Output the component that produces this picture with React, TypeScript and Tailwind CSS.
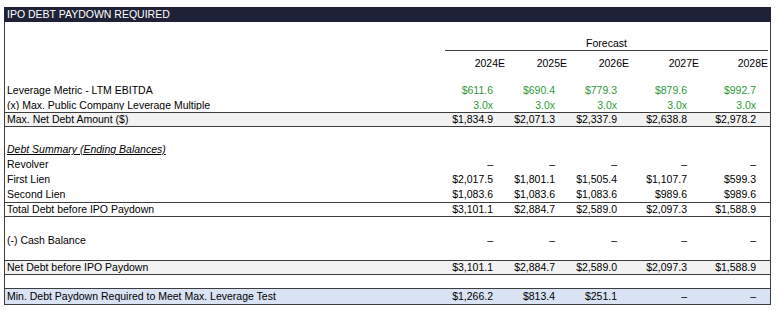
const COLS = ["w-[62px]", "w-[62px]", "w-[62px]", "w-[70px]", "w-[69px]"];
const YEARS = ["2024E", "2025E", "2026E", "2027E", "2028E"];
const DASH = "–";

type RowProps = {
  label?: React.ReactNode;
  values?: string[];
  h?: string;
  bg?: string;
  lines?: string;
  tone?: string;
};

function Row({ label, values, h = "h-[15px]", bg = "", lines = "", tone = "text-black" }: RowProps) {
  return (
    <div className={`flex items-center ${h} ${bg} ${lines} border-[#3d3d3d]`}>
      <div className="w-[440px] pl-[2px] truncate text-black">{label}</div>
      {values?.map((v, i) => (
        <div key={i} className={`${COLS[i]} pr-[14px] text-right ${tone}`}>
          {v}
        </div>
      ))}
    </div>
  );
}

export default function App() {
  return (
    <div className="w-[780px] h-[314px] bg-white pt-[7px] pl-[4px] text-[10.5px] leading-none" style={{ fontFamily: '"Liberation Sans", Arial, sans-serif' }}>
      <div className="w-[767px] h-[15px] bg-[#1f2236] text-white flex items-center pl-[3px]">
        IPO DEBT PAYDOWN REQUIRED
      </div>
      <div className="w-[767px] border-x border-[#3d3d3d]">
        <div className="h-[14px]" />
        <div className="flex h-[15px]">
          <div className="w-[440px]" />
          <div className="w-[323px] border-b border-[#3d3d3d] flex items-center justify-center text-black">Forecast</div>
        </div>
        <div className="flex items-end h-[18px] pb-[1px]">
          <div className="w-[440px]" />
          {YEARS.map((y, i) => (
            <div key={y} className={`${COLS[i]} pr-[2px] text-right text-black`}>
              {y}
            </div>
          ))}
        </div>
        <div className="h-[14px]" />
        <Row label="Leverage Metric - LTM EBITDA" values={["$611.6", "$690.4", "$779.3", "$879.6", "$992.7"]} tone="text-[#2e9a38]" />
        <Row label="(x) Max. Public Company Leverage Multiple" values={["3.0x", "3.0x", "3.0x", "3.0x", "3.0x"]} tone="text-[#2e9a38]" h="h-[14px]" />
        <Row label="Max. Net Debt Amount ($)" values={["$1,834.9", "$2,071.3", "$2,337.9", "$2,638.8", "$2,978.2"]} bg="bg-[#f2f2f2]" lines="border-y" />
        <div className="h-[15px]" />
        <Row label={<span className="italic underline">Debt Summary (Ending Balances)</span>} />
        <Row label="Revolver" values={[DASH, DASH, DASH, DASH, DASH]} />
        <Row label="First Lien" values={["$2,017.5", "$1,801.1", "$1,505.4", "$1,107.7", "$599.3"]} />
        <Row label="Second Lien" values={["$1,083.6", "$1,083.6", "$1,083.6", "$989.6", "$989.6"]} />
        <Row label="Total Debt before IPO Paydown" values={["$3,101.1", "$2,884.7", "$2,589.0", "$2,097.3", "$1,588.9"]} lines="border-y" />
        <div className="h-[16px]" />
        <Row label="(-) Cash Balance" values={[DASH, DASH, DASH, DASH, DASH]} />
        <div className="h-[12px]" />
        <Row label="Net Debt before IPO Paydown" values={["$3,101.1", "$2,884.7", "$2,589.0", "$2,097.3", "$1,588.9"]} bg="bg-[#f2f2f2]" lines="border-y" />
        <div className="h-[13px]" />
        <Row label="Min. Debt Paydown Required to Meet Max. Leverage Test" values={["$1,266.2", "$813.4", "$251.1", DASH, DASH]} bg="bg-[#dae3f3]" lines="border-y" h="h-[17px]" />
      </div>
    </div>
  );
}
